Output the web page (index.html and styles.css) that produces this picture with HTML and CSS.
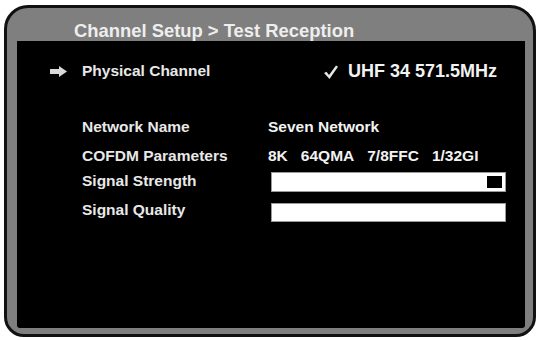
FILE: index.html
```html
<!DOCTYPE html>
<html lang="en">
<head>
    <meta charset="UTF-8">
    <meta name="viewport" content="width=device-width, initial-scale=1.0">
    <link rel="stylesheet" href="styles.css">
</head>
<body>
    <div class="osd-frame">
        <!-- Titulo -->
        <div class="osd-title">Channel Setup &gt; Test Reception</div>

        <div class="osd-screen">
            <!-- Canal fisico -->
            <div class="channel-row">
                <svg class="pointer" width="17" height="11" viewBox="0 0 17 11">
                    <polygon points="0,3 9,3 9,0 17,5.5 9,11 9,8 0,8" fill="#d9d9d9"/>
                </svg>
                <span class="channel-label">Physical Channel</span>
                <span class="channel-value">
                    <svg class="tick" width="14" height="14" viewBox="0 0 14 14">
                        <path d="M0 8 L2.5 6.8 L5 10 L12 0.5 L14 1.8 L5.5 14 Z" fill="#e6e6e6"/>
                    </svg>
                    UHF 34 571.5MHz
                </span>
            </div>

            <!-- Informacoes -->
            <div class="info-row row-network">
                <span class="info-label">Network Name</span>
                <span class="info-value">Seven Network</span>
            </div>
            <div class="info-row row-cofdm">
                <span class="info-label">COFDM Parameters</span>
                <span class="info-value params">
                    <span>8K</span>
                    <span>64QMA</span>
                    <span>7/8FFC</span>
                    <span>1/32GI</span>
                </span>
            </div>
            <div class="info-row row-strength">
                <span class="info-label">Signal Strength</span>
                <div class="meter meter-strength">
                    <div class="meter-mark"></div>
                </div>
            </div>
            <div class="info-row row-quality">
                <span class="info-label">Signal Quality</span>
                <div class="meter meter-quality"></div>
            </div>
        </div>
    </div>
</body>
</html>
```

FILE: styles.css
```css
* {
    margin: 0;
    padding: 0;
    box-sizing: border-box;
    font-family: 'Liberation Sans', Arial, sans-serif;
}

body {
    background: #fff;
    width: 540px;
    height: 340px;
    overflow: hidden;
    padding: 5px 0 0 4px;
}

.osd-frame {
    width: 532px;
    height: 332px;
    background: #7f7f7f;
    border: 3px solid #111;
    border-radius: 24px 26px 20px 20px;
    padding: 0 8px 6px 10px;
    display: flex;
    flex-direction: column;
}

.osd-title {
    height: 33px;
    padding: 14px 0 0 57px;
    color: #eee;
    font-size: 18.4px;
    line-height: 18px;
    font-weight: bold;
}

.osd-screen {
    flex: 1;
    background: #000;
    border-radius: 0 0 3px 3px;
    padding-top: 20px;
    color: #e8e8e8;
    font-weight: bold;
}

.channel-row {
    display: flex;
    align-items: center;
    height: 20px;
    padding: 0 28px 0 33px;
}

.pointer {
    display: block;
}

.channel-label {
    margin-left: 15px;
    font-size: 15.5px;
    line-height: 20px;
}

.channel-value {
    margin-left: auto;
    display: flex;
    align-items: center;
    gap: 10px;
    font-size: 18px;
    line-height: 20px;
    color: #f2f2f2;
}

.tick {
    display: block;
    margin-top: 2px;
}

.info-row {
    display: grid;
    grid-template-columns: 186px 1fr;
    align-items: start;
    padding-left: 65px;
    font-size: 15.5px;
    line-height: 20px;
}

.row-network {
    margin-top: 36px;
}

.row-cofdm {
    margin-top: 9px;
}

.row-strength {
    margin-top: 5px;
}

.row-quality {
    margin-top: 8px;
}

.info-value {
    color: #f2f2f2;
}

.params {
    display: flex;
    gap: 13px;
}

.meter {
    width: 235px;
    margin-left: 3px;
    background: #fff;
    border: 1px solid #9a9a9a;
    display: flex;
    justify-content: flex-end;
    align-items: center;
    padding-right: 3px;
}

.meter-strength {
    height: 20px;
    margin-top: 1px;
}

.meter-quality {
    height: 19px;
    margin-top: 3px;
}

.meter-mark {
    width: 15px;
    height: 12px;
    background: #000;
}
```
